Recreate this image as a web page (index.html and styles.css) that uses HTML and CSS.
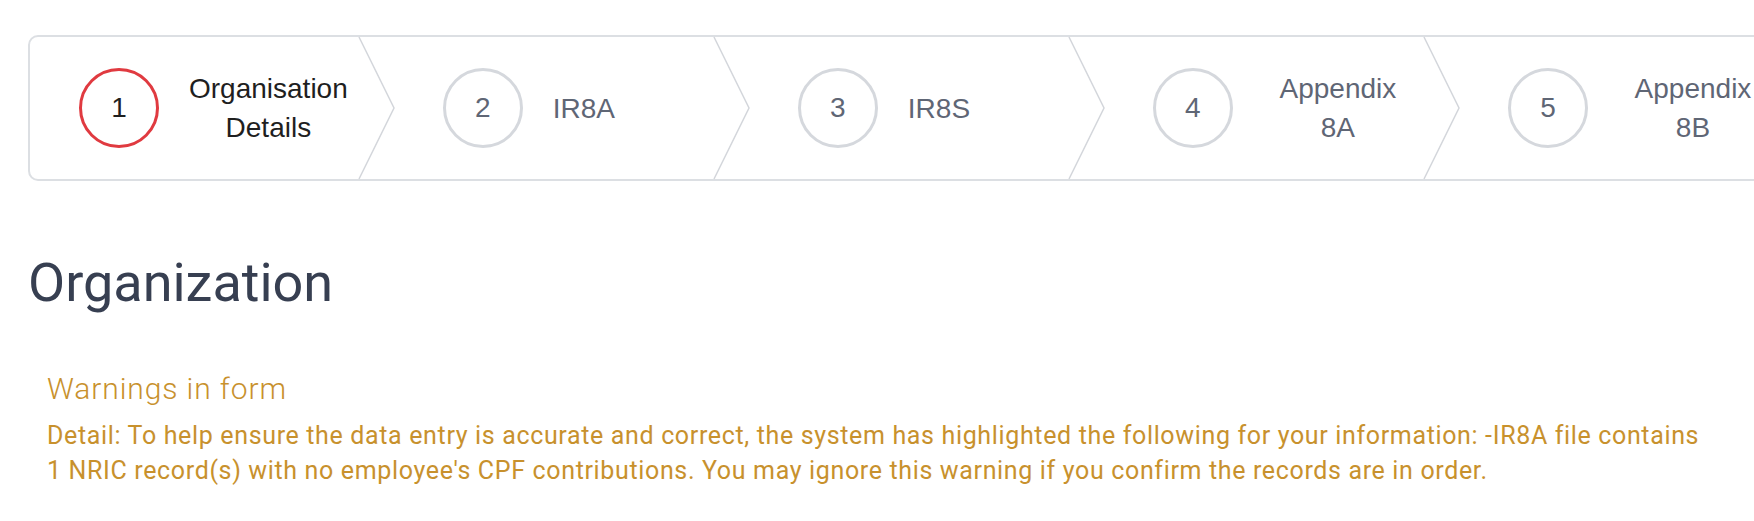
FILE: index.html
```html
<!DOCTYPE html>
<html lang="en">
<head>
<meta charset="utf-8">
<title>Organization</title>
<link rel="stylesheet" href="styles.css">
</head>
<body>
<div class="page">
  <div class="stepper">
    <div class="step active">
      <span class="num">1</span>
      <span class="label">Organisation Details</span>
      <svg class="chev" viewBox="0 0 35 142" preserveAspectRatio="none"><polyline points="0,0 35,71 0,142"/></svg>
    </div>
    <div class="step">
      <span class="num">2</span>
      <span class="label">IR8A</span>
      <svg class="chev" viewBox="0 0 35 142" preserveAspectRatio="none"><polyline points="0,0 35,71 0,142"/></svg>
    </div>
    <div class="step">
      <span class="num">3</span>
      <span class="label">IR8S</span>
      <svg class="chev" viewBox="0 0 35 142" preserveAspectRatio="none"><polyline points="0,0 35,71 0,142"/></svg>
    </div>
    <div class="step">
      <span class="num">4</span>
      <span class="label">Appendix 8A</span>
      <svg class="chev" viewBox="0 0 35 142" preserveAspectRatio="none"><polyline points="0,0 35,71 0,142"/></svg>
    </div>
    <div class="step">
      <span class="num">5</span>
      <span class="label">Appendix 8B</span>
    </div>
  </div>

  <h1 class="title">Organization</h1>

  <div class="warning">
    <h3 class="warning-title">Warnings in form</h3>
    <p class="warning-detail">Detail: To help ensure the data entry is accurate and correct, the system has highlighted the following for your information: -IR8A file contains 1 NRIC record(s) with no employee's CPF contributions. You may ignore this warning if you confirm the records are in order.</p>
  </div>
</div>
</body>
</html>
```

FILE: styles.css
```css
html, body {
  margin: 0;
  padding: 0;
  background: #ffffff;
  overflow: hidden;
}

.page {
  padding: 35px 28px 0 28px;
  font-family: "Liberation Sans", Arial, sans-serif;
}

.stepper {
  display: flex;
  width: 1788px;
  height: 146px;
  box-sizing: border-box;
  border: 2px solid #dcdfe3;
  border-radius: 10px;
  background: #ffffff;
}

.step {
  position: relative;
  flex: 1 1 0;
  display: flex;
  align-items: center;
  gap: 30px;
  padding: 0 46px 0 49px;
}

.num {
  flex: 0 0 auto;
  width: 80px;
  height: 80px;
  box-sizing: border-box;
  border: 3px solid #d5d8dd;
  border-radius: 50%;
  display: flex;
  align-items: center;
  justify-content: center;
  font-size: 28px;
  color: #5f6675;
}

.label {
  flex: 0 1 auto;
  font-size: 28px;
  line-height: 39px;
  text-align: center;
  color: #5f6675;
}

.step.active .num {
  border-color: #e03a40;
  color: #1f1f1f;
}

.step.active .label {
  color: #1f1f1f;
}

.chev {
  position: absolute;
  top: 0;
  right: 0;
  width: 35px;
  height: 100%;
  overflow: visible;
}

.chev polyline {
  fill: none;
  stroke: #d3d6db;
  stroke-width: 1.5;
  vector-effect: non-scaling-stroke;
}

.title {
  margin: 69px 0 0 0;
  font-family: Roboto, "Liberation Sans", sans-serif;
  font-weight: 400;
  font-size: 54px;
  line-height: 66px;
  color: #373f51;
}

.warning {
  padding-left: 19px;
  margin-top: 55px;
  color: #c8912d;
  font-family: Roboto, "Liberation Sans", sans-serif;
}

.warning-title {
  margin: 0;
  font-weight: 300;
  font-size: 30px;
  line-height: 35px;
  letter-spacing: 0.9px;
}

.warning-detail {
  margin: 12px 0 0 0;
  max-width: 1668px;
  font-size: 25px;
  line-height: 35px;
  font-weight: 400;
  letter-spacing: 0.65px;
}
```
